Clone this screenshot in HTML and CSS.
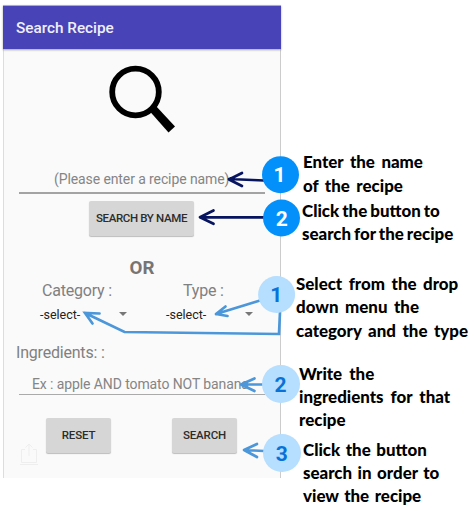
FILE: index.html
```html
<!DOCTYPE html>
<html lang="en">
<head>
<meta charset="utf-8">
<title>Search Recipe</title>
<link rel="stylesheet" href="styles.css">
</head>
<body>
<div class="guide">
  <main class="phone">
    <header class="bar">Search Recipe</header>
    <div class="hero">
      <svg width="68" height="70" viewBox="0 0 68 70"><circle cx="27.500" cy="27" r="23.300" fill="none" stroke="#000" stroke-width="5.800"/><path d="M41.500 46l6-5.500L67 61.500l-6.500 6z"/></svg>
    </div>
    <div class="field name">(Please enter a recipe name)</div>
    <button class="btn by-name">SEARCH BY NAME</button>
    <div class="or">OR</div>
    <div class="filters">
      <section><div class="label category">Category :</div><div class="select"><span>-select-</span><i class="caret"></i></div></section>
      <section><div class="label type">Type :</div><div class="select"><span>-select-</span><i class="caret"></i></div></section>
    </div>
    <div class="label ingredients">Ingredients: :</div>
    <div class="field ing">Ex : apple AND tomato NOT banana</div>
    <div class="actions">
      <svg class="share" width="18" height="23" viewBox="0 0 18 23" fill="none" stroke="#eee"><path d="M5 6.500H1.500V19.500H16.500V6.500H13M9 13V1.500M5.500 4.500L9 1l3.500 3.500M0 21.500h18"/></svg>
      <button class="btn">RESET</button>
      <button class="btn">SEARCH</button>
    </div>
  </main>
  <aside class="notes">
    <p class="note n1"><span>Enter the name</span><span>of the recipe</span></p>
    <p class="note n2"><span>Click the button to</span><span>search for the recipe</span></p>
    <p class="note n3"><span>Select from the drop</span><span>down menu the</span><span>category and the type</span></p>
    <p class="note n4"><span>Write the</span><span>ingredients for that</span><span>recipe</span></p>
    <p class="note n5"><span>Click the button</span><span>search in order to</span><span>view the recipe</span></p>
  </aside>
  <svg class="pins" width="474" height="511" viewBox="0 0 474 511">
    <g class="dark"><path d="M264 180.500L229 179M242 173L229 179.500l13 6.500"/><path d="M264 217.300H200M213.500 210.500L200 217.300l13.500 6.500"/></g>
    <g class="light"><path d="M260 300.500L216 314M225.500 306.500L216 314l11.500 2"/><path class="elbow" d="M280 312L279 334 124.500 332 85 313M99.500 313.500L85 313l7.500 10.500"/><path d="M263 384.500H241M254.500 378.500L241 384.500l13.500 6.500"/><path d="M264 451L244 450M257 444L244 450l13 7"/></g>
    <g class="strong"><circle cx="280.500" cy="174.700" r="18.500"/><text x="279.500" y="182">1</text><circle cx="281.500" cy="218" r="18.500"/><text x="281.800" y="225.500">2</text></g>
    <g class="pale"><circle cx="276.600" cy="294.500" r="18.500"/><text x="276.300" y="302">1</text><circle cx="281" cy="384" r="19"/><text x="280.500" y="391.500">2</text><circle cx="282" cy="453" r="19"/><text x="281.800" y="460.500">3</text></g>
  </svg>
</div>
</body>
</html>
```
FILE: styles.css
```css
body { margin: 0; background: #fff; }
.guide {
  position: relative;
  display: flex;
  width: 474px;
  height: 511px;
  overflow: hidden;
  font-family: Roboto, "Liberation Sans", sans-serif;
}
.phone {
  box-sizing: border-box;
  flex: none;
  width: 278px;
  height: 473px;
  margin: 5px 0 0 3px;
  background: #fafafa;
  border-left: 1px solid #ddd;
  border-right: 1px solid #ccc;
  display: flex;
  flex-direction: column;
}
.bar {
  flex: none;
  box-sizing: border-box;
  height: 44px;
  margin: 0 -1px;
  padding-left: 13px;
  background: #4843b7;
  border-top: 1px solid #aaa7d8;
  box-shadow: 0 1px 2px rgba(0, 0, 0, .35);
  color: #f0f0fb;
  font-size: 15.300px;
  font-weight: 500;
  line-height: 44px;
}
.hero { flex: none; height: 103px; padding: 16px 0 0 104px; }
.field {
  margin: 0 15px;
  height: 22px;
  line-height: 22px;
  font-size: 14px;
  letter-spacing: -.1px;
  color: #858585;
  white-space: nowrap;
}
.name { height: 24px; padding-left: 35px; border-bottom: 2px solid #a3a3a3; }
.ing { margin-top: 9px; padding-left: 13px; height: 21px; border-bottom: 1px solid #aaa; }
.btn {
  border: 0;
  padding: 0;
  border-radius: 2px;
  background: #d6d6d6;
  box-shadow: 0 1px 1px rgba(0, 0, 0, .25);
  color: #2c2c2c;
  font: 500 11.500px/35px Roboto, "Liberation Sans", sans-serif;
  letter-spacing: -.35px;
  height: 35px;
}
.by-name { width: 105px; margin: 7px 0 0 85px; }
.or { margin-top: 20px; text-align: center; font-size: 18.700px; font-weight: 700; line-height: 24px; color: #757575; }
.filters { display: grid; grid-template-columns: 126px 126px; padding-left: 36px; }
.label { font-size: 16px; letter-spacing: -.2px; line-height: 22px; color: #808080; white-space: nowrap; }
.category { padding-left: 2px; }
.type { padding-left: 17px; }
.select { display: flex; align-items: center; justify-content: space-between; padding-right: 39px; height: 24px; font-size: 12.500px; color: #222; }
.caret { border: 4px solid transparent; border-top-color: #777; border-bottom: 0; }
.ingredients { margin-top: 16px; padding-left: 12px; }
.actions { display: grid; grid-template-columns: 26px 65px 65px; padding-left: 16px; margin-top: 23px; }
.actions .btn { letter-spacing: -.15px; }
.actions .btn:last-child { margin-left: 61px; width: 65px; }
.share { margin: 25px 0 -13px; }
.notes {
  flex: 1;
  padding-top: 150px;
  font-family: Lato, "Liberation Sans", sans-serif;
  font-size: 16.900px;
  font-weight: 900;
  color: #000;
  white-space: nowrap;
}
.note { margin: 0; line-height: 23.300px; }
.note span { display: block; }
.n1 { padding-left: 22px; word-spacing: 2.500px; line-height: 24px; }
.n2 { padding-left: 21px; margin-top: 2px; word-spacing: -1px; line-height: 22.500px; }
.n3 { padding-left: 15px; margin-top: 27px; word-spacing: 2.500px; }
.n4 { padding-left: 18px; margin-top: 20px; word-spacing: 3px; }
.n5 { padding-left: 22px; margin-top: 6px; word-spacing: 1.500px; }
.pins { position: absolute; left: 0; top: 0; }
.dark path, .light path { fill: none; stroke-width: 2.700; stroke-linecap: round; stroke-linejoin: round; }
.dark path { stroke: #07145f; }
.light path { stroke: #4b97d9; }
.light .elbow { stroke-linejoin: miter; }
.pins text { font-size: 21px; font-weight: 700; text-anchor: middle; }
.strong circle { fill: #0490fa; }
.strong text { fill: #fff; }
.pale circle { fill: #b5deff; }
.pale text { fill: #0872d8; }
```
